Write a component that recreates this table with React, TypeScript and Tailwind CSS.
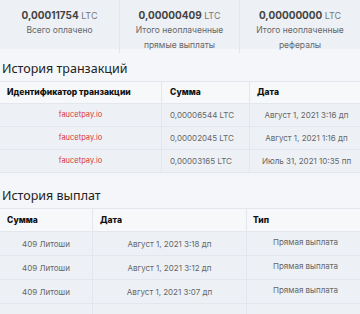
import React from 'react';

type Stat = { value: string; label: string[] };

const stats: Stat[] = [
  { value: '0,00011754', label: ['Всего оплачено'] },
  { value: '0,00000409', label: ['Итого неоплаченные', 'прямые выплаты'] },
  { value: '0,00000000', label: ['Итого неоплаченные', 'рефералы'] },
];

const transactions = [
  { id: 'faucetpay.io', amount: '0,00006544 LTC', date: 'Август 1, 2021 3:16 дп' },
  { id: 'faucetpay.io', amount: '0,00002045 LTC', date: 'Август 1, 2021 1:16 дп' },
  { id: 'faucetpay.io', amount: '0,00003165 LTC', date: 'Июль 31, 2021 10:35 пп' },
];

const payouts = [
  { amount: '409 Литоши', date: 'Август 1, 2021 3:18 дп', type: 'Прямая выплата' },
  { amount: '409 Литоши', date: 'Август 1, 2021 3:12 дп', type: 'Прямая выплата' },
  { amount: '409 Литоши', date: 'Август 1, 2021 3:07 дп', type: 'Прямая выплата' },
];

const App: React.FC = () => {
  return (
    <div className="w-[360px] h-[314px] overflow-hidden bg-[#f4f6f9] font-['Inter','Noto_Sans',sans-serif] flex flex-col">
      {/* Balance summary */}
      <div className="grid grid-cols-3 h-[49px] bg-[#edf1f6] shrink-0">
        {stats.map((s, i) => (
          <div
            key={i}
            className={`flex flex-col items-center pt-[9px] text-[8.5px] leading-[13px] text-[#666] ${
              i < 2 ? 'border-r border-[#e3e7ed]' : ''
            }`}
          >
            <div className="text-[#444]">
              <span className="font-bold text-[10px]">{s.value}</span>{' '}
              <span className="text-[9px] text-[#777]">LTC</span>
            </div>
            {s.label.map((l) => (
              <div key={l} className={s.label.length > 1 ? 'leading-[15px]' : 'mt-[1px]'}>
                {l}
              </div>
            ))}
          </div>
        ))}
      </div>

      {/* Transaction history */}
      <h2 className="mt-[11px] px-[2px] text-[12.5px] leading-[18px] text-[#222] font-['Noto_Sans',sans-serif]">
        История транзакций
      </h2>
      <div className="mt-[3px] text-[8.5px] border-t border-[#e3e7ed]">
        <div className="grid grid-cols-[162px_88px_1fr] h-[22px] bg-[#f7f8fa] border-b border-[#e3e7ed] font-extrabold text-[#111]">
          <div className="flex items-center pl-[7px] border-r border-[#e3e7ed]">Идентификатор транзакции</div>
          <div className="flex items-center pl-[8px] border-r border-[#e3e7ed]">Сумма</div>
          <div className="flex items-center pl-[7px]">Дата</div>
        </div>
        {transactions.map((t, i) => (
          <div
            key={i}
            className="grid grid-cols-[162px_88px_1fr] h-[23px] bg-[#edf1f6] border-b border-[#e3e7ed] text-[#666] text-[8px]"
          >
            <div className="flex items-center justify-center border-r border-[#e3e7ed] text-[#d9363e] text-[7.5px]">
              {t.id}
            </div>
            <div className="flex items-center pl-[8px] border-r border-[#e3e7ed]">{t.amount}</div>
            <div className="flex items-center justify-center pl-[3px]">{t.date}</div>
          </div>
        ))}
      </div>

      {/* Payout history */}
      <h2 className="mt-[14px] px-[2px] text-[12.5px] leading-[18px] text-[#222] font-['Noto_Sans',sans-serif]">
        История выплат
      </h2>
      <div className="mt-[3px] text-[8.5px] border-t border-[#e3e7ed]">
        <div className="grid grid-cols-[93px_154px_1fr] h-[23px] bg-[#f7f8fa] border-b border-[#e3e7ed] font-extrabold text-[#111]">
          <div className="flex items-center pl-[7px] border-r border-[#e3e7ed]">Сумма</div>
          <div className="flex items-center pl-[7px] border-r border-[#e3e7ed]">Дата</div>
          <div className="flex items-center pl-[6px]">Тип</div>
        </div>
        {payouts.map((p, i) => (
          <div
            key={i}
            className="grid grid-cols-[93px_154px_1fr] h-[24px] bg-[#edf1f6] border-b border-[#e3e7ed] text-[#666] text-[8px]"
          >
            <div className="flex items-center justify-center border-r border-[#e3e7ed]">{p.amount}</div>
            <div className="flex items-center justify-center border-r border-[#e3e7ed]">{p.date}</div>
            <div className="flex items-center justify-center pb-[3px] pl-[4px]">{p.type}</div>
          </div>
        ))}
        <div className="h-[15px] bg-[#edf1f6] grid grid-cols-[93px_154px_1fr]">
          <div className="border-r border-[#e3e7ed]" />
          <div className="border-r border-[#e3e7ed]" />
          <div />
        </div>
      </div>
      <div className="h-[3px] bg-[#3a3a3a] shrink-0" />
    </div>
  );
};

export default App;
